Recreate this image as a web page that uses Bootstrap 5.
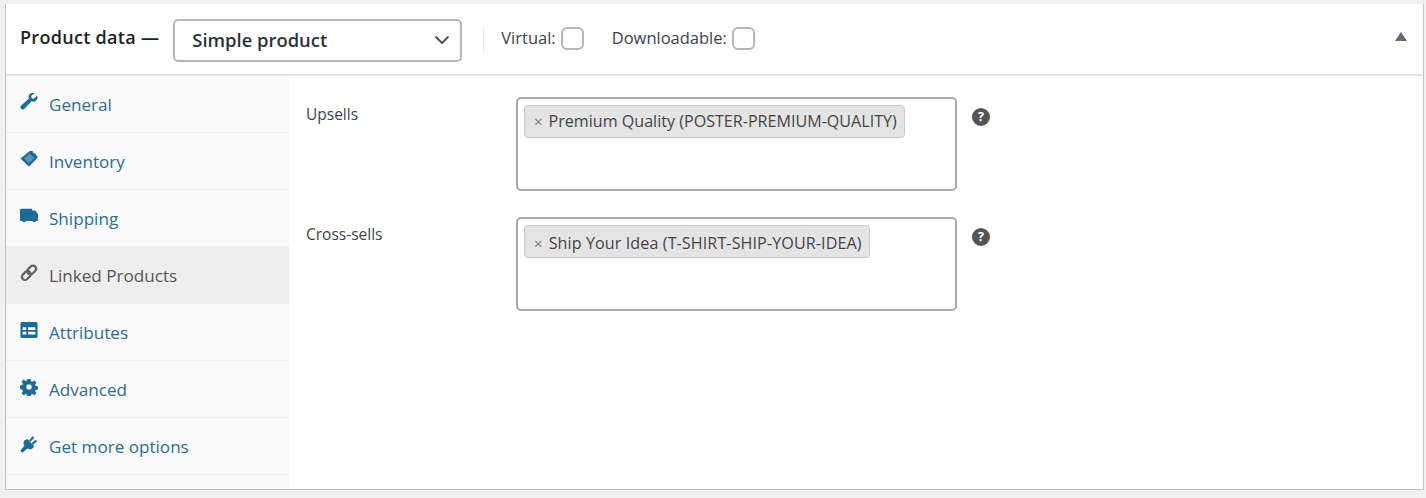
<!DOCTYPE html>
<html lang="en">
<head>
<meta charset="UTF-8" />
<title>Product data</title>
<link href="https://cdn.jsdelivr.net/npm/bootstrap@5.3.0/dist/css/bootstrap.min.css" rel="stylesheet" />
<style>
  html, body { height: 498px; overflow: hidden; }
  body { background: #f0f0f1; font-family: "Open Sans", "Noto Sans", sans-serif; color: #3c434a; padding: 4px 2px 8px 5px; font-size: 15.5px; }
  .pd-panel { background: #fff; height: 486px; border-left: 1px solid #c3c4c7; border-right: 1px solid #c3c4c7; border-bottom: 1px solid #c3c4c7; }
  .pd-head { height: 72px; border-bottom: 2px solid #e5e5e5; padding: 0 16px 0 14px; color: #1d2327; }
  .pd-title { font-weight: 600; font-size: 18px; letter-spacing: .3px; margin-right: 14px; margin-top: -4px; }
  .pd-select { width: 289px; height: 43px; border: 2px solid #b4b6b9; border-radius: 5px; padding: 0 10px 0 17px; font-weight: 600; font-size: 18.4px; color: #2c3338; margin-top: 2px; }
  .pd-sep { width: 1px; height: 24px; background: #e4e4e4; margin: 0 17px 0 21px; }
  .pd-check { font-size: 16.5px; color: #3c434a; font-weight: 500; margin-right: 28px; margin-top: -2px; }
  .pd-box { width: 23px; height: 23px; border: 2px solid #b4b6b9; border-radius: 6px; margin-left: 5px; }
  .pd-caret { width: 0; height: 0; border-left: 6px solid transparent; border-right: 6px solid transparent; border-bottom: 9px solid #646970; margin-top: -6px; }
  .pd-side { width: 283px; background: #fafafa; height: 412px; }
  .pd-tab { height: 57px; border-bottom: 1px solid #eee; padding: 2px 0 0 14px; color: #2b6d8f; text-decoration: none; font-size: 17.1px; gap: 11px; }
  .pd-tab svg { width: 18px; height: 18px; fill: #1c6a96; stroke: none; flex: none; margin-top: -6px; }
  .pd-tab.pd-active { background: #eee; color: #555; border-bottom-color: #eee; }
  .pd-tab.pd-active svg { fill: #555; }
  .pd-body { padding: 21px 0 0 17px; }
  .pd-field { margin-bottom: 26px; }
  .pd-label { width: 210px; font-size: 15.5px; color: #3c434a; padding-top: 6px; }
  .pd-multi { width: 441px; height: 94px; border: 2px solid #a7aaad; border-radius: 5px; padding: 6px; }
  .pd-chip { background: #e4e4e4; border: 1px solid #c8c8c8; border-radius: 4px; height: 33px; padding: 0 7px 0 9px; font-size: 16.1px; color: #444; gap: 6px; }
  .pd-chip-low { letter-spacing: .1px; padding-top: 3px; }
  .pd-x { color: #777; font-size: 15px; }
  .pd-help { width: 18px; height: 18px; border-radius: 50%; background: #555; color: #fff; font-size: 12.5px; font-weight: 700; margin: 11px 0 0 15px; }
</style>
</head>
<body>
<div class="pd-panel">
  <div class="pd-head d-flex align-items-center">
    <span class="pd-title">Product data —</span>
    <div class="pd-select d-flex align-items-center justify-content-between">
      <span>Simple product</span>
      <svg width="16" height="10" viewBox="0 0 16 10"><path d="M1.500 1.500 8 8l6.500-6.500" fill="none" stroke="#50575e" stroke-width="2"/></svg>
    </div>
    <span class="pd-sep"></span>
    <label class="pd-check d-flex align-items-center">Virtual:<span class="pd-box"></span></label>
    <label class="pd-check d-flex align-items-center">Downloadable:<span class="pd-box"></span></label>
    <span class="pd-caret ms-auto"></span>
  </div>
  <div class="d-flex">
    <div class="pd-side d-flex flex-column">
      <a href="#" class="pd-tab d-flex align-items-center">
        <svg viewBox="0 0 20 20"><path d="M19 2.800 15.400 6.400 13 5.700 12.400 3.300 16 .4C13.600-.6 10.900.3 10 2.200c-.6 1.300-.6 2.700 0 4L1.400 13.800C.2 15 .3 16.600 1.300 17.500c1 1 2.500 1 3.600-.1L12.800 9.300c1.800.6 3.800.3 5.200-1 1.500-1.300 1.800-3.600 1-5.500z"/></svg>General
      </a>
      <a href="#" class="pd-tab d-flex align-items-center">
        <svg viewBox="0 0 20 20"><path d="M11 1h3l1 2.500h1.500L19.800 8 10 18.500 .5 9.500z"/><path d="M10.800 4.200 15.800 8.500 10 14.800 4.500 9.400z" fill="#5b93b5"/></svg>Inventory
      </a>
      <a href="#" class="pd-tab d-flex align-items-center">
        <svg viewBox="0 0 20 20"><path d="M1 2h12.500v2H16.800L20 8v6.500a1 1 0 0 1-1 1h-1.200a2 2 0 0 1-3.900 0H6.500a2 2 0 0 1-3.900 0H1a1 1 0 0 1-1-1V3a1 1 0 0 1 1-1z"/></svg>Shipping
      </a>
      <a href="#" class="pd-tab pd-active d-flex align-items-center">
        <svg viewBox="0 0 20 20"><g fill="none" stroke="#666" stroke-width="2.600"><rect x="9.500" y="1.200" width="7" height="11" rx="3.500" transform="rotate(45 13 6.700)"/><rect x="3.500" y="7.300" width="7" height="11" rx="3.500" transform="rotate(45 7 12.800)"/></g></svg>Linked Products
      </a>
      <a href="#" class="pd-tab d-flex align-items-center">
        <svg viewBox="0 0 20 20"><path fill-rule="evenodd" d="M2 1h16a1.500 1.500 0 0 1 1.500 1.500v15A1.500 1.500 0 0 1 18 19H2a1.500 1.500 0 0 1-1.500-1.500v-15A1.500 1.500 0 0 1 2 1zM3 7v3h4V7zM9 7v3h8V7zM3 12v3h4v-3zM9 12v3h8v-3z"/></svg>Attributes
      </a>
      <a href="#" class="pd-tab d-flex align-items-center">
        <svg viewBox="0 0 20 20"><path fill-rule="evenodd" d="M8.300 1h3.400l.5 2.600 1.500.6 2.200-1.500 2.400 2.400-1.500 2.200.6 1.500 2.600.5v3.400l-2.600.5-.6 1.500 1.500 2.200-2.400 2.400-2.200-1.500-1.500.6-.5 2.600H8.300l-.5-2.600-1.500-.6-2.200 1.500-2.400-2.400 1.500-2.200-.6-1.500L0 11.700V8.300l2.600-.5.6-1.500-1.500-2.200 2.400-2.400 2.200 1.500 1.500-.6zM10 7a3 3 0 1 0 0 6 3 3 0 0 0 0-6z"/></svg>Advanced
      </a>
      <a href="#" class="pd-tab d-flex align-items-center">
        <svg viewBox="0 0 20 20"><path d="M8 4.500 15.500 12c-.4 2-1.700 3.300-3.500 3.700-1.500.3-2.800 0-4-.8L3.200 19.500 1 18.800l-.3-2.200L5 12C4 10.800 3.600 9.400 4 8c.4-1.700 2-3.100 4-3.500z"/><path d="M10 6 14 1.500 15.800 3 11.700 7.600zM13 9 17.500 5.200 19 7 14.600 10.800z"/></svg>Get more options
      </a>
    </div>
    <div class="pd-body flex-grow-1">
      <div class="pd-field d-flex align-items-start">
        <div class="pd-label">Upsells</div>
        <div class="pd-multi">
          <span class="pd-chip d-inline-flex align-items-center"><span class="pd-x">×</span>Premium Quality (POSTER-PREMIUM-QUALITY)</span>
        </div>
        <span class="pd-help d-flex align-items-center justify-content-center">?</span>
      </div>
      <div class="pd-field d-flex align-items-start">
        <div class="pd-label">Cross-sells</div>
        <div class="pd-multi">
          <span class="pd-chip pd-chip-low d-inline-flex align-items-center"><span class="pd-x">×</span>Ship Your Idea (T-SHIRT-SHIP-YOUR-IDEA)</span>
        </div>
        <span class="pd-help d-flex align-items-center justify-content-center">?</span>
      </div>
    </div>
  </div>
</div>
<script src="https://cdn.jsdelivr.net/npm/bootstrap@5.3.0/dist/js/bootstrap.bundle.min.js"></script>
</body>
</html>
